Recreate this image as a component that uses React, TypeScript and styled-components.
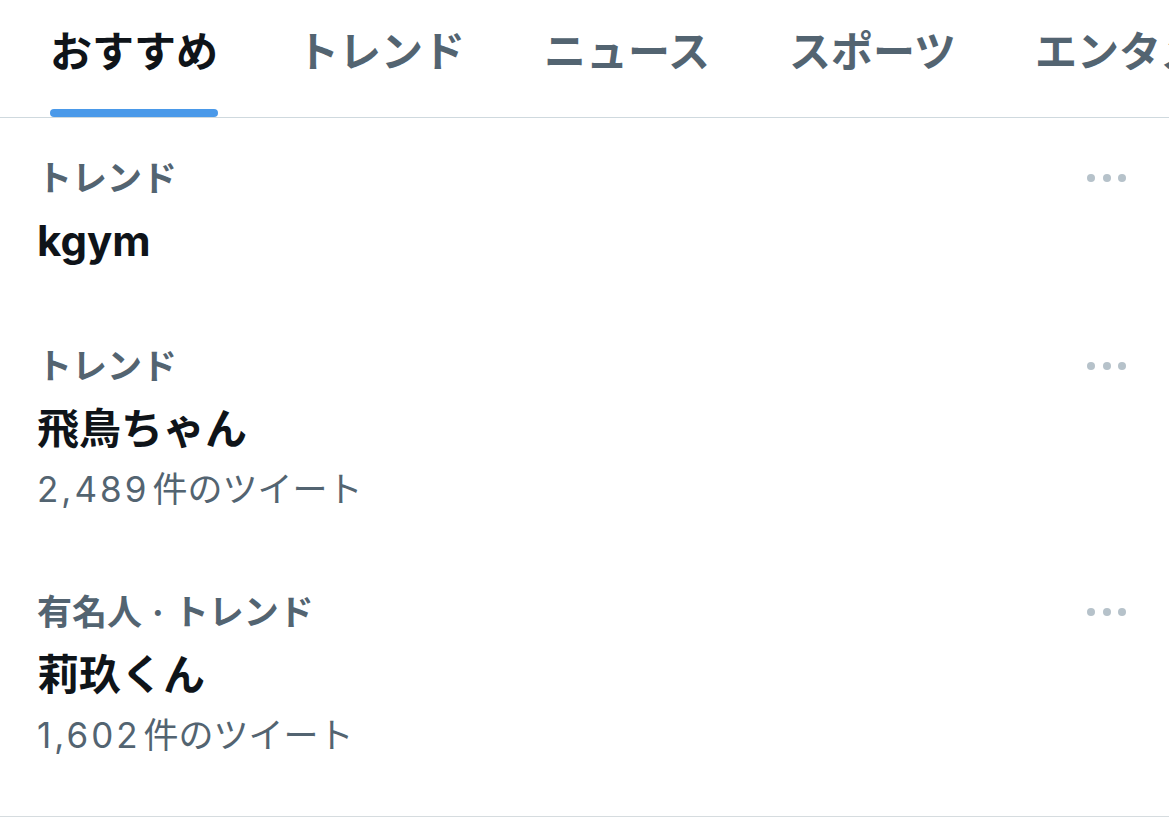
import React from 'react';
import styled, { createGlobalStyle } from 'styled-components';

const GlobalStyle = createGlobalStyle`
  html, body {
    margin: 0;
    padding: 0;
    background: #ffffff;
    overflow: hidden;
  }
  body {
    font-family: 'Inter', 'Noto Sans CJK JP', sans-serif;
    color: #0f1419;
  }
`;

const Root = styled.div`
  width: 1169px;
  height: 818px;
  overflow: hidden;
  background: #ffffff;
`;

const TabBar = styled.nav`
  display: flex;
  gap: 79px;
  height: 117px;
  padding-left: 50px;
  border-bottom: 1px solid #cfd9de;
  white-space: nowrap;
  overflow: hidden;
`;

const Tab = styled.div<{ $active?: boolean }>`
  display: flex;
  flex-direction: column;
  flex-shrink: 0;
  padding-top: 24px;
  font-family: 'Noto Sans CJK JP', sans-serif;
  font-size: 42px;
  line-height: 50px;
  font-weight: 700;
  color: ${(p) => (p.$active ? '#0f1419' : '#536471')};
`;

const Indicator = styled.div`
  margin-top: auto;
  height: 8px;
  border-radius: 4px;
  background: #4a99e9;
`;

const List = styled.section`
  padding-bottom: 18px;
  border-bottom: 1px solid #d6dcdf;
`;

const Row = styled.article<{ $hasCount?: boolean }>`
  display: flex;
  align-items: flex-start;
  padding: 38px 43px ${(p) => (p.$hasCount ? 31 : 37)}px 37px;
`;

const Body = styled.div`
  flex: 1;
  min-width: 0;
`;

const Category = styled.div`
  font-size: 35px;
  line-height: 44px;
  font-weight: 700;
  color: #536471;
`;

const Sep = styled.span`
  display: inline-block;
  margin: 0 10px;
`;

const Title = styled.div`
  margin-top: 13px;
  font-size: 42px;
  line-height: 56px;
  font-weight: 700;
  color: #0f1419;
`;

const Count = styled.div`
  font-size: 35px;
  line-height: 64px;
  font-weight: 400;
  color: #536471;
`;

const Num = styled.span`
  letter-spacing: 3px;
  margin-right: 3px;
`;

const More = styled.div`
  display: flex;
  align-items: center;
  gap: 7.5px;
  height: 44px;
`;

const Dot = styled.span`
  width: 8px;
  height: 8px;
  border-radius: 50%;
  background: #b6c2ca;
`;

type Trend = {
  category: string[];
  name: string;
  count?: string;
};

const tabs = ['おすすめ', 'トレンド', 'ニュース', 'スポーツ', 'エンタメ'];

const trends: Trend[] = [
  { category: ['トレンド'], name: 'kgym' },
  { category: ['トレンド'], name: '飛鳥ちゃん', count: '2,489' },
  { category: ['有名人', 'トレンド'], name: '莉玖くん', count: '1,602' },
];

const App: React.FC = () => {
  const [active] = React.useState(0);

  return (
    <Root>
      <GlobalStyle />
      <TabBar>
        {tabs.map((t, i) => (
          <Tab key={t} $active={i === active}>
            <span>{t}</span>
            {i === active && <Indicator />}
          </Tab>
        ))}
      </TabBar>
      <List>
        {trends.map((trend) => (
          <Row key={trend.name} $hasCount={!!trend.count}>
            <Body>
              <Category>
                {trend.category.map((c, i) => (
                  <React.Fragment key={c}>
                    {i > 0 && <Sep>·</Sep>}
                    {c}
                  </React.Fragment>
                ))}
              </Category>
              <Title>{trend.name}</Title>
              {trend.count && (
                <Count>
                  <Num>{trend.count}</Num>件のツイート
                </Count>
              )}
            </Body>
            <More>
              <Dot />
              <Dot />
              <Dot />
            </More>
          </Row>
        ))}
      </List>
    </Root>
  );
};

export default App;
